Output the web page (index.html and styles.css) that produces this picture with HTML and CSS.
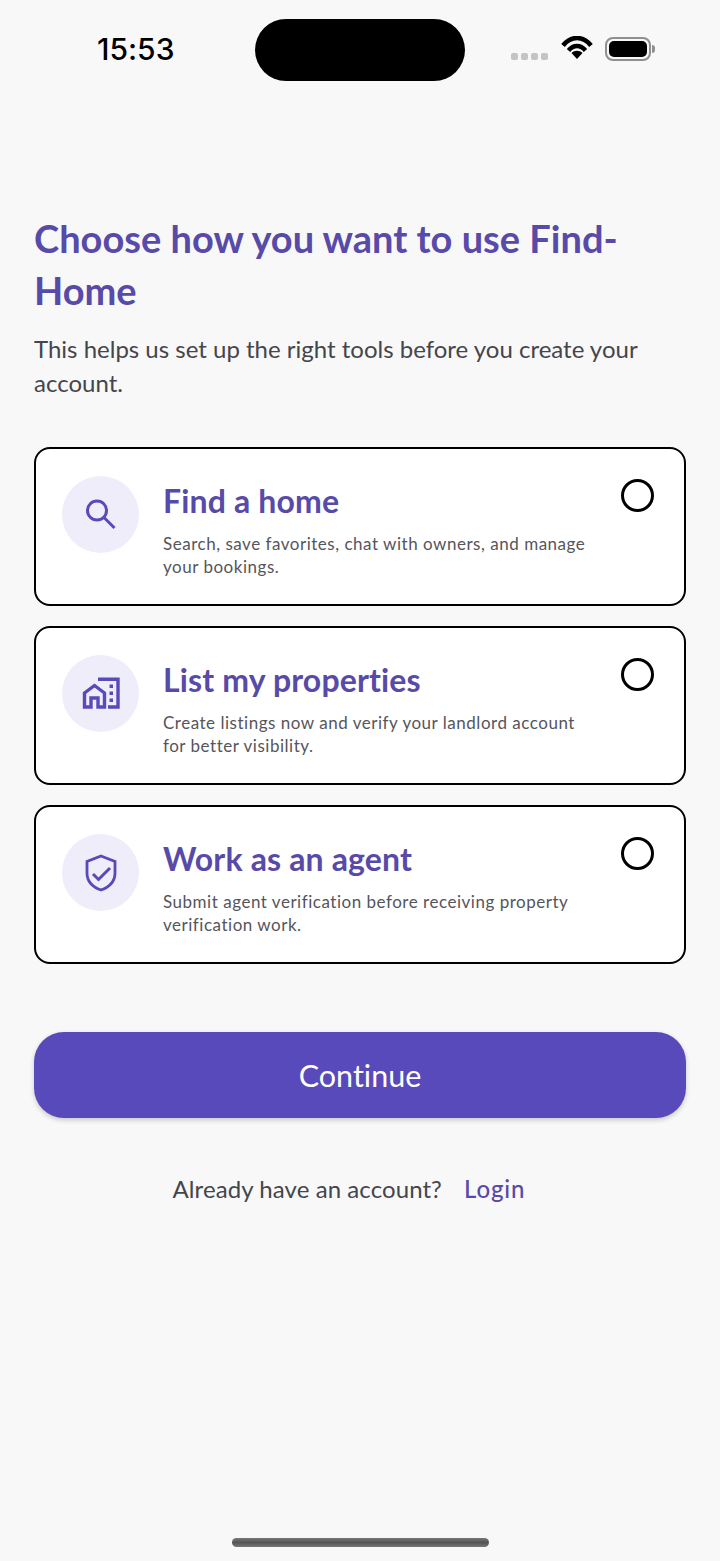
FILE: index.html
```html
<!DOCTYPE html>
<html lang="en">
<head>
<meta charset="utf-8">
<title>Find-Home</title>
<link rel="stylesheet" href="styles.css">
</head>
<body>
<div class="screen">
  <header class="status">
    <span class="time">15:53</span>
    <div class="island"></div>
    <div class="status-icons">
      <div class="dots"><i></i><i></i><i></i><i></i></div>
      <svg class="wifi" width="34" height="24" viewBox="0 0 34 24"><path d="M3 9.500C11-.5 23-.5 31 9.500" fill="none" stroke="#000" stroke-width="4.600"/><path d="M8.500 14.500C13.500 8.500 20.500 8.500 25.500 14.500" fill="none" stroke="#000" stroke-width="4.400"/><path d="M17 23l-5.500-6c3-3 8-3 11 0z" fill="#000"/></svg>
      <div class="battery"><div class="battery-fill"></div></div>
      <div class="battery-cap"></div>
    </div>
  </header>
  <main class="content">
    <h1 class="title">Choose how you want to use Find-Home</h1>
    <p class="sub">This helps us set up the right tools before you create your account.</p>
    <div class="cards">
      <section class="card">
        <div class="badge">
          <svg width="36" height="36" viewBox="0 0 36 36" fill="none" stroke="#584aba" stroke-width="3"><circle cx="14" cy="13.500" r="9.500"/><path d="M21 20.500L31.500 31"/></svg>
        </div>
        <div class="card-text">
          <h2 class="card-title">Find a home</h2>
          <p class="card-desc">Search, save favorites, chat with owners, and manage your bookings.</p>
        </div>
        <div class="radio"></div>
      </section>
      <section class="card">
        <div class="badge">
          <svg width="40" height="36" viewBox="0 0 40 36" fill="none" stroke="#584aba" stroke-width="3.400"><path d="M3.500 31V17L13.500 9.500 23.500 17V31H17V22H10V31z"/><path d="M17 3.200H37V31H27"/><path d="M28.500 8.500H32V12H28.500zM28.500 15.500H32V19H28.500zM28.500 22.500H32V26H28.500z" fill="#584aba" stroke="none"/></svg>
        </div>
        <div class="card-text">
          <h2 class="card-title">List my properties</h2>
          <p class="card-desc">Create listings now and verify your landlord account for better visibility.</p>
        </div>
        <div class="radio"></div>
      </section>
      <section class="card">
        <div class="badge">
          <svg width="36" height="40" viewBox="0 0 36 40" fill="none" stroke="#584aba" stroke-width="2.800"><path d="M18 3L32 8.500V20C32 28 26.500 34 18 37 9.500 34 4 28 4 20V8.500z"/><path d="M10 21L15.500 26.500 27 15" stroke-width="3"/></svg>
        </div>
        <div class="card-text">
          <h2 class="card-title">Work as an agent</h2>
          <p class="card-desc">Submit agent verification before receiving property verification work.</p>
        </div>
        <div class="radio"></div>
      </section>
    </div>
    <button class="cta" type="button">Continue</button>
    <p class="login-row"><span>Already have an account?</span><a class="login" href="#">Login</a></p>
  </main>
  <div class="home-bar"></div>
</div>
</body>
</html>
```

FILE: styles.css
```css
* { box-sizing: border-box; margin: 0; padding: 0; }
html, body { width: 720px; height: 1561px; background: #f8f8f8; overflow: hidden; }
body { font-family: Lato, "Open Sans", sans-serif; color: #3f3f46; font-variant-ligatures: none; }
.screen { width: 720px; height: 1561px; display: flex; flex-direction: column; }
.status { height: 81px; padding: 19px 64px 0 97px; display: flex; align-items: flex-start; flex-shrink: 0; }
.time { font-family: Inter, Roboto, sans-serif; font-weight: 500; font-size: 30px; line-height: 60px; color: #000; width: 158px; }
.island { width: 210px; height: 62px; border-radius: 31px; background: #000; }
.status-icons { display: flex; align-items: center; margin-left: 46px; height: 60px; }
.dots { display: flex; gap: 3px; margin: 15px 12px 0 0; }
.dots i { width: 7px; height: 7px; border-radius: 2px; background: #c4c4c4; display: block; }
.wifi { margin-right: 11px; margin-top: -3px; }
.battery { width: 46px; height: 24px; border: 2px solid #8f8f8f; border-radius: 8px; padding: 2px; margin-top: -1px; }
.battery-fill { width: 100%; height: 100%; background: #000; border-radius: 5px; }
.battery-cap { width: 3px; height: 8px; background: #8f8f8f; border-radius: 0 3px 3px 0; margin-left: 1px; }
.content { padding: 131px 34px 0; flex: 1; }
.title { font-size: 38px; line-height: 52px; font-weight: 700; color: #584aa8; }
.sub { font-size: 24px; line-height: 34px; margin-top: 16px; color: #45454c; }
.cards { margin-top: 47px; display: flex; flex-direction: column; gap: 20px; }
.card { height: 159px; background: #fff; border: 2px solid #000; border-radius: 16px; padding: 27px 30px 0 26px; display: flex; align-items: flex-start; }
.badge { width: 77px; height: 77px; border-radius: 50%; background: #efedfa; display: flex; align-items: center; justify-content: center; flex-shrink: 0; }
.card-text { margin-left: 24px; width: 432px; }
.card-title { font-size: 32px; line-height: 52px; font-weight: 700; color: #584aa8; margin-top: -1px; letter-spacing: 0.15px; }
.card-desc { font-size: 17px; line-height: 23px; margin-top: 5px; color: #55555c; letter-spacing: 0.52px; }
.radio { width: 33px; height: 33px; border: 3px solid #000; border-radius: 50%; margin: 3px 0 0 auto; flex-shrink: 0; }
.cta { display: block; width: 100%; height: 86px; margin-top: 68px; background: #584aba; border: 0; border-radius: 30px; color: #fff; font-family: inherit; font-size: 30.5px; font-variant-ligatures: none; box-shadow: 0 2px 5px rgba(0,0,0,.2); }
.login-row { margin-top: 54px; display: flex; justify-content: center; gap: 22px; font-size: 24px; line-height: 34px; padding-right: 22px; color: #45454c; letter-spacing: 0.08px; }
.login { color: #584aa8; text-decoration: none; font-weight: 500; letter-spacing: 0.9px; }
.home-bar { width: 257px; height: 9px; border-radius: 5px; background: linear-gradient(#777, #555 50%, #777); margin: 0 auto 14px; flex-shrink: 0; }
```
